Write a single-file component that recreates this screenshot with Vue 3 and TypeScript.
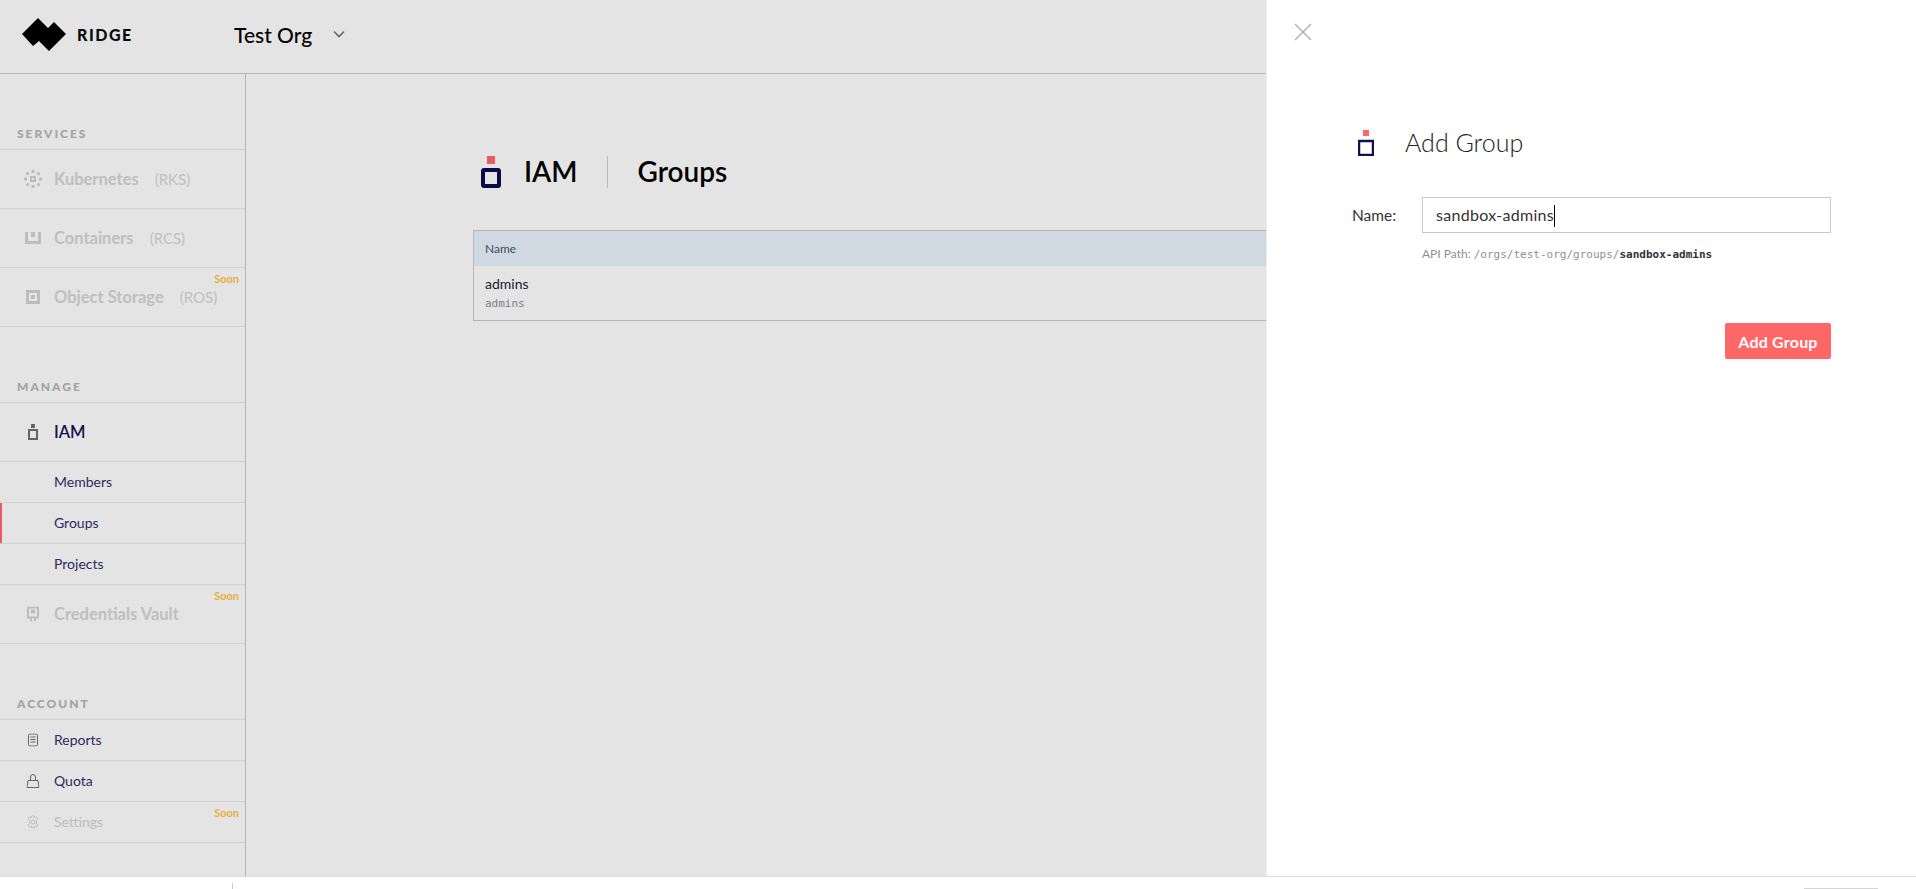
<script setup lang="ts">
interface NavItem { label: string; tag?: string; soon?: boolean; kind: string; icon?: string }
const services: NavItem[] = [
  { label: 'Kubernetes', tag: '(RKS)', kind: 'muted', icon: 'kube' },
  { label: 'Containers', tag: '(RCS)', kind: 'muted', icon: 'box' },
  { label: 'Object Storage', tag: '(ROS)', kind: 'muted', icon: 'store', soon: true },
]
const subs = ['Members', 'Groups', 'Projects']
const account: NavItem[] = [
  { label: 'Reports', kind: 'plain', icon: 'reports' },
  { label: 'Quota', kind: 'plain', icon: 'quota' },
  { label: 'Settings', kind: 'off', icon: 'gear', soon: true },
]
</script>

<template>
  <div class="page">
    <div class="app">
      <header class="top">
        <div class="brand">
          <svg class="logo" width="44" height="35" viewBox="0 0 44 35"><path d="M0 17 16 1l10 10 6-6 12 12-17 17-10-10-6 5z" fill="#000"/></svg>
          <span class="brand-name">RIDGE</span>
        </div>
        <div class="org">Test Org</div>
        <svg class="caret" width="12" height="8" viewBox="0 0 12 8"><path d="M1 1.500 6 6.500l5-5" fill="none" stroke="#666" stroke-width="1.600"/></svg>
      </header>
      <div class="body">
        <aside class="side">
          <div class="sec first">SERVICES</div>
          <div v-for="s in services" :key="s.label" class="row big muted">
            <svg v-if="s.icon === 'kube'" class="ic" width="18" height="18" viewBox="0 0 18 18" fill="#bcbcbc"><path d="M6 6h6v6H6zm2 2v2h2V8z" fill-rule="evenodd"/><path d="M7.500 0h3v3h-3zM7.500 15h3v3h-3zM0 7.500h3v3H0zM15 7.500h3v3h-3zM3.500 1.500l2 2-2 2-2-2zM14.500 1.500l2 2-2 2-2-2zM3.500 12.500l2 2-2 2-2-2zM14.500 12.500l2 2-2 2-2-2z"/></svg>
            <svg v-else-if="s.icon === 'box'" class="ic" width="16" height="12" viewBox="0 0 16 12" fill="#bdbdbd"><path d="M0 0h3v9h10V0h3v12H0zM6 0h4v5H6z"/></svg>
            <svg v-else class="ic" width="14" height="14" viewBox="0 0 14 14" fill="#bdbdbd"><path d="M0 0h14v14H0zm3 3v8h8V3zm2 2h4v4H5z" fill-rule="evenodd"/></svg>
            <span class="lbl">{{ s.label }}</span>
            <span class="tag">{{ s.tag }}</span>
            <span v-if="s.soon" class="soon">Soon</span>
          </div>

          <div class="sec">MANAGE</div>
          <div class="row big iam">
            <svg class="ic" width="10" height="16" viewBox="0 0 10 16"><rect x="3" width="4" height="4" fill="#5f6668"/><rect x="1" y="6" width="8" height="9" fill="none" stroke="#5f6668" stroke-width="2"/></svg>
            <span class="lbl">IAM</span>
          </div>
          <div v-for="n in subs" :key="n" class="row sub" :class="{ active: n === 'Groups' }">{{ n }}</div>
          <div class="row big muted">
            <svg class="ic" width="12" height="15" viewBox="0 0 12 15" fill="#bdbdbd"><path d="M0 0h12v12h-3v3H7v-3H5v3H3v-3H0zm2 2v8h8V2zm2 1h4v4H4z" fill-rule="evenodd"/></svg>
            <span class="lbl">Credentials Vault</span>
            <span class="soon">Soon</span>
          </div>

          <div class="sec">ACCOUNT</div>
          <div v-for="a in account" :key="a.label" class="row acct" :class="a.kind">
            <svg v-if="a.icon === 'reports'" class="ic" width="10" height="13" viewBox="0 0 10 13" fill="none" stroke="#5f6668"><rect x=".5" y=".5" width="9" height="12" rx="1.500"/><path d="M2.500 3.500h5M2.500 6h5M2.500 8.500h5"/></svg>
            <svg v-else-if="a.icon === 'quota'" class="ic" width="13" height="14" viewBox="0 0 13 14" fill="none" stroke="#5f6668"><path d="M1.500 6.500h10l1 7H.5zM4 6.500V3a2.500 2.500 0 0 1 5 0v3.500"/></svg>
            <svg v-else class="ic" width="13" height="14" viewBox="0 0 13 14" fill="none" stroke="#bdbdbd"><circle cx="6.500" cy="7" r="2"/><path d="M5.200 1h2.600l.4 1.900 1.700-.9 1.400 2.300-1.400 1.200v3l1.400 1.200-1.400 2.300-1.700-.9-.4 1.900H5.200l-.4-1.900-1.700.9-1.400-2.300L3.100 8.500v-3L1.700 4.300 3.100 2l1.700.9z" stroke-linejoin="round"/></svg>
            <span>{{ a.label }}</span>
            <span v-if="a.soon" class="soon">Soon</span>
          </div>
        </aside>
        <main class="main">
          <div class="head">
            <svg class="h-ic" width="20" height="32" viewBox="0 0 20 32"><rect x="6" width="8" height="8" fill="#ea5b60"/><rect x="2" y="14" width="16" height="16" rx="1" fill="none" stroke="#0c0a47" stroke-width="4"/></svg>
            <h1 class="h-a">IAM</h1>
            <span class="h-sep"></span>
            <h1 class="h-b">Groups</h1>
          </div>
          <div class="tbl">
            <div class="th">Name</div>
            <div class="td">
              <div class="n1">admins</div>
              <div class="n2">admins</div>
            </div>
          </div>
        </main>
      </div>
      <footer class="foot">
        <span class="tick"></span>
        <span class="foot-box"></span>
      </footer>
    </div>

    <section class="panel">
      <svg class="close" width="18" height="18" viewBox="0 0 18 18"><path d="M1 1l16 16M17 1 1 17" stroke="#a9adad" stroke-width="1.300" fill="none"/></svg>
      <div class="p-head">
        <svg class="p-ic" width="16" height="26" viewBox="0 0 16 26"><rect x="5" width="6" height="6" fill="#ff6666"/><rect x="1" y="11" width="14" height="14" fill="none" stroke="#12104f" stroke-width="2.500"/></svg>
        <h2>Add Group</h2>
      </div>
      <div class="field">
        <label>Name:</label>
        <div class="input">sandbox-admins<i class="cur"></i></div>
      </div>
      <div class="api">API Path: <span class="m">/orgs/test-org/groups/</span><b class="m">sandbox-admins</b></div>
      <div class="actions"><button class="btn">Add Group</button></div>
    </section>
  </div>
</template>

<style>
html, body { margin: 0; height: 100%; overflow: hidden; background: #fff; }
</style>

<style scoped>
.page { position: relative; width: 1916px; height: 889px; overflow: hidden; font-family: "Lato", "Noto Sans", sans-serif; }
.app { display: flex; flex-direction: column; height: 889px; }
.top { flex: 0 0 74px; box-sizing: border-box; display: flex; align-items: center; padding-bottom: 5px; background: #e4e4e4; border-bottom: 1px solid #b8b8b8; }
.brand { display: flex; align-items: center; width: 234px; padding-left: 22px; box-sizing: border-box; }
.logo { flex: none; }
.brand-name { margin-left: 11px; font-weight: 900; font-size: 16px; letter-spacing: 1.500px; color: #0a0a0a; }
.org { font-size: 21px; font-weight: 500; color: #000; }
.caret { margin-left: 21px; }
.body { flex: 1; display: flex; min-height: 0; background: #e4e4e4; }
.side { width: 246px; flex: none; border-right: 1px solid #b5b5b5; box-sizing: border-box; padding-top: 51px; }
.sec { padding-left: 17px; font-size: 12px; font-weight: 900; letter-spacing: 2px; color: #a1a3a3; line-height: 18px; height: 25px; margin-top: 51px; border-bottom: 1px solid #d2d2d2; box-sizing: border-box; }
.sec.first { margin-top: 0; }
.row { position: relative; display: flex; align-items: center; border-bottom: 1px solid #d2d2d2; box-sizing: border-box; }
.big { height: 59px; }
.sub { height: 41px; padding-left: 54px; padding-bottom: 2px; font-size: 14px; color: #2c2a5f; }
.sub.active::before { content: ""; position: absolute; left: 0; top: 0; bottom: 0; width: 2px; background: #ea5b60; }
.acct { height: 41px; padding-bottom: 1px; font-size: 14px; color: #2c2a5f; }
.acct.off { color: #bdbdbd; }
.ic { position: absolute; left: 33px; top: 50%; transform: translate(-50%, -50%); }
.big .lbl { margin-left: 54px; font-size: 16.500px; font-weight: 700; }
.acct span:first-of-type { margin-left: 54px; }
.muted { color: #bfbfbf; }
.iam .lbl { color: #14124d; font-weight: 600; }
.tag { margin-left: 16px; font-size: 15px; color: #c0c0c0; }
.soon { position: absolute; right: 6px; top: 4px; font-size: 11px; font-weight: 700; color: #e8ae40; }
.main { flex: 1; min-width: 0; padding: 82px 0 0 227px; }
.head { display: flex; align-items: center; height: 32px; padding-left: 8px; }
.h-ic { flex: none; }
.head h1 { margin: 0 0 2px; font-size: 28px; font-weight: 600; color: #000; }
.head .h-a { margin-left: 23px; }
.h-sep { width: 1px; height: 32px; background: #b9b9b9; margin: 0 30px 0 29px; }
.tbl { margin-top: 42px; width: 1200px; border: 1px solid #b5b5b5; }
.th { height: 35px; line-height: 35px; background: #d0d9e2; padding-left: 11px; font-size: 12px; color: #3f4a66; }
.td { height: 54px; padding: 8px 11px 0; box-sizing: border-box; }
.n1 { font-size: 14px; color: #1a1a2a; line-height: 20px; }
.n2 { margin-top: 1px; font-size: 11px; font-family: "DejaVu Sans Mono", monospace; color: #7a8088; line-height: 18px; }
.foot { position: relative; flex: 0 0 13px; box-sizing: border-box; background: #fff; border-top: 1px solid #dcdcdc; }
.tick { position: absolute; left: 232px; top: 6px; width: 1px; height: 6px; background: #c9c9c9; }
.foot-box { position: absolute; left: 1804px; top: 11px; width: 74px; height: 1px; background: #d5d5d5; }
.panel { position: absolute; left: 1266px; top: 0; bottom: 13px; width: 650px; background: #fff; border-left: 1px solid #efefef; box-sizing: border-box; padding: 130px 85px 0 91px; }
.close { position: absolute; left: 27px; top: 23px; }
.p-head { display: flex; align-items: center; height: 26px; }
.p-ic { flex: none; }
.p-head h2 { margin: 0 0 2px 31px; font-size: 25px; font-weight: 300; color: #222; }
.field { display: flex; align-items: center; margin-top: 41px; margin-left: -6px; }
.field label { width: 70px; padding-bottom: 1px; font-size: 15.500px; color: #333; }
.input { flex: 1; height: 36px; line-height: 33px; box-sizing: border-box; border: 1px solid #c9c9c9; padding-left: 13px; font-size: 16px; letter-spacing: .3px; color: #333; }
.cur { display: inline-block; width: 1px; height: 22px; background: #000; vertical-align: -6px; }
.api { margin: 13px 0 0 64px; font-size: 12px; color: #8f8f8f; line-height: 16px; }
.m { font-family: "DejaVu Sans Mono", monospace; font-size: 11px; }
b.m { color: #333; }
.actions { display: flex; justify-content: flex-end; margin-top: 60px; }
.btn { width: 106px; height: 36px; border: 0; border-radius: 2px; background: #ff6666; color: #fff; font: 700 16px "Lato", sans-serif; letter-spacing: .2px; }
</style>
